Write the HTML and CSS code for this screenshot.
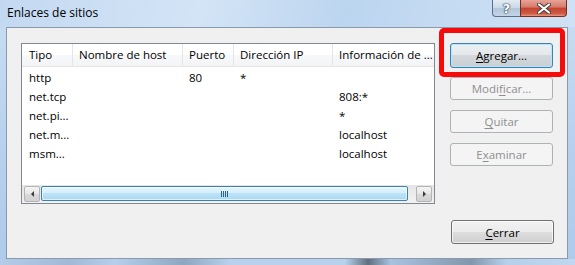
FILE: index.html
```html
<!DOCTYPE html>
<html lang="es">
<head>
  <meta charset="UTF-8" />
  <title>Enlaces de sitios</title>
  <link rel="stylesheet" href="styles.css">
</head>
<body>
  <div class="ventana">
    <div class="barra-titulo">
      <span class="titulo">Enlaces de sitios</span>
      <div class="controles">
        <span class="ctl ayuda">?</span>
        <span class="ctl cerrar-ventana">
          <svg viewBox="0 0 14 11" width="14" height="11">
            <path d="M2 1.5 L12 9.5 M12 1.5 L2 9.5" stroke="#3b3b3b" stroke-width="4" stroke-linecap="round"/>
            <path d="M2 1.5 L12 9.5 M12 1.5 L2 9.5" stroke="#ffffff" stroke-width="2.2" stroke-linecap="round"/>
          </svg>
        </span>
      </div>
    </div>

    <div class="cliente">
      <div class="zona">
        <div class="lista">
          <div class="columnas cabecera">
            <span>Tipo</span>
            <span>Nombre de host</span>
            <span>Puerto</span>
            <span>Dirección IP</span>
            <span>Información de ...</span>
          </div>
          <div class="filas">
            <div class="columnas"><span>http</span><span></span><span>80</span><span>*</span><span></span></div>
            <div class="columnas"><span>net.tcp</span><span></span><span></span><span></span><span>808:*</span></div>
            <div class="columnas"><span>net.pi...</span><span></span><span></span><span></span><span>*</span></div>
            <div class="columnas"><span>net.m...</span><span></span><span></span><span></span><span>localhost</span></div>
            <div class="columnas"><span>msm...</span><span></span><span></span><span></span><span>localhost</span></div>
          </div>
          <div class="desplazamiento">
            <span class="flecha izq"></span>
            <span class="pulgar"><span class="agarre"></span></span>
            <span class="flecha der"></span>
          </div>
        </div>

        <div class="botones">
          <div class="resaltado">
            <button class="boton predeterminado"><u>A</u>gregar...</button>
          </div>
          <button class="boton" disabled>Modi<u>f</u>icar...</button>
          <button class="boton" disabled><u>Q</u>uitar</button>
          <button class="boton" disabled>E<u>x</u>aminar</button>
        </div>
      </div>

      <div class="pie">
        <button class="boton"><u>C</u>errar</button>
      </div>
    </div>

    <div class="borde-inferior"></div>
  </div>
</body>
</html>
```

FILE: styles.css
```css
body {
  margin: 0;
  font-family: 'Open Sans', 'Noto Sans', sans-serif;
  font-size: 11.5px;
  color: #000;
}

.ventana {
  width: 575px;
  height: 265px;
  background: linear-gradient(to bottom, #c9def3, #b6d0ec 60%, #aecbea);
  display: flex;
  flex-direction: column;
  overflow: hidden;
}

.barra-titulo {
  height: 27px;
  display: flex;
  justify-content: space-between;
  align-items: flex-start;
  background: linear-gradient(100deg, #c3d9f1 0%, #d3e4f6 35%, #bcd5ef 60%, #cfe2f5 100%);
}

.titulo {
  padding: 5px 0 0 7px;
  line-height: 16px;
  font-size: 12px;
  color: #000;
}

.controles {
  display: flex;
  margin-right: 8px;
}

.ctl {
  height: 17px;
  display: flex;
  align-items: center;
  justify-content: center;
  box-sizing: border-box;
  border: 1px solid #5b6f85;
  border-top: none;
}

.ayuda {
  width: 28px;
  border-right: none;
  border-radius: 0 0 0 4px;
  background: linear-gradient(to bottom, #e3ebf4, #cad8e7 50%, #b2c5da 50%, #c3d4e6);
  color: #fff;
  font-weight: bold;
  font-size: 13px;
  font-family: 'DejaVu Sans', sans-serif;
  text-shadow: 0 0 1px #2c3e52, 0 0 1px #2c3e52, 0 0 2px #2c3e52;
}

.cerrar-ventana {
  width: 47px;
  border-radius: 0 0 4px 0;
  border-color: #7a2a1e;
  background: linear-gradient(to bottom, #e8a397, #d47a6a 45%, #c2432f 50%, #d05b45 85%, #e59a80);
}

.cliente {
  margin-left: 6px;
  width: 562px;
  height: 232px;
  box-sizing: border-box;
  border: 1px solid #8a9aac;
  background: #f0f0f0;
  padding: 15px 13px 0 14px;
}

.zona {
  display: flex;
  gap: 15px;
  align-items: flex-start;
}

.lista {
  width: 414px;
  height: 161px;
  box-sizing: border-box;
  border: 1px solid #828790;
  background: #fff;
  display: flex;
  flex-direction: column;
}

.columnas {
  display: grid;
  grid-template-columns: 51px 110px 51px 99px 1fr;
  line-height: 19px;
  white-space: nowrap;
}

.columnas span {
  padding-left: 6px;
  overflow: hidden;
}

.columnas span:first-child {
  padding-left: 7px;
}

.cabecera {
  height: 22px;
  line-height: 22px;
  border-bottom: 1px solid #e5e5e5;
  background: linear-gradient(to bottom, #ffffff, #ffffff 50%, #f7f8fa 50%, #f3f4f6);
  color: #000;
}

.cabecera span {
  border-right: 1px solid #e3e5e8;
}

.cabecera span:last-child {
  border-right: none;
}

.filas {
  padding-top: 1px;
}

.desplazamiento {
  margin-top: auto;
  height: 18px;
  box-sizing: border-box;
  padding: 1px 2px;
  display: flex;
  background: linear-gradient(to bottom, #e5e5e5, #f2f2f2);
}

.flecha {
  width: 16px;
  height: 16px;
  box-sizing: border-box;
  border: 1px solid #b4b4b4;
  border-radius: 2px;
  background: linear-gradient(to bottom, #f4f4f4, #e6e6e6 50%, #d9d9d9 50%, #d2d2d2);
  display: flex;
  align-items: center;
  justify-content: center;
}

.flecha::before {
  content: '';
  border-top: 3px solid transparent;
  border-bottom: 3px solid transparent;
}

.izq::before {
  border-right: 3px solid #3a3a3a;
}

.der {
  margin-left: 8px;
}

.der::before {
  border-left: 3px solid #3a3a3a;
}

.pulgar {
  margin-left: 1px;
  width: 367px;
  height: 15px;
  box-sizing: border-box;
  border: 1px solid #3c7fb1;
  border-radius: 2px;
  background: linear-gradient(to bottom, #e6f5fd, #d3edfb 50%, #bde3f8 50%, #a9d8f2);
  box-shadow: inset 0 0 0 1px rgba(255, 255, 255, 0.6);
  display: flex;
  align-items: center;
  justify-content: center;
}

.agarre {
  width: 7px;
  height: 6px;
  background: repeating-linear-gradient(to right, #2b5f8a 0 1px, transparent 1px 2px);
}

.botones {
  width: 103px;
  display: flex;
  flex-direction: column;
}

.boton {
  width: 103px;
  height: 23px;
  box-sizing: border-box;
  padding: 0;
  font: inherit;
  color: #000;
  border: 1px solid #707070;
  border-radius: 3px;
  background: linear-gradient(to bottom, #f2f2f2, #ebebeb 50%, #dddddd 50%, #cfcfcf);
  box-shadow: inset 0 0 0 1px rgba(255, 255, 255, 0.7);
}

.boton u {
  text-decoration-thickness: 1px;
  text-underline-offset: 2px;
}

.boton:disabled {
  color: #8f8f8f;
  border-color: #adb2b5;
  background: #f4f4f4;
  box-shadow: none;
  margin-top: 10px;
}

.resaltado {
  position: relative;
  margin-bottom: -1px;
}

.resaltado::after {
  content: '';
  position: absolute;
  top: -15px;
  left: -11px;
  right: -12px;
  bottom: -9px;
  border: 5px solid #f60a0a;
  border-radius: 5px;
}

.predeterminado {
  height: 25px;
  border-color: #3c7fb1;
  box-shadow: inset 0 0 0 1px #b5e6fb;
  background: linear-gradient(to bottom, #eef1f3, #e4e7ea 50%, #d4d8dc 50%, #c9cfd4);
}

.pie {
  display: flex;
  justify-content: flex-end;
  margin-top: 16px;
  padding-right: 0;
}

.pie .boton {
  height: 24px;
}

.borde-inferior {
  height: 6px;
  background: linear-gradient(to right, #b3cde9 0%, #9fb9d6 12%, #b6cfea 20%, #8ea6c0 32%, #b8d1ec 40%, #b8d1ec 60%, #5f6f80 64%, #a8c2df 68%, #8397ac 82%, #b6cfea 88%, #c0d7ef 100%);
}
```
